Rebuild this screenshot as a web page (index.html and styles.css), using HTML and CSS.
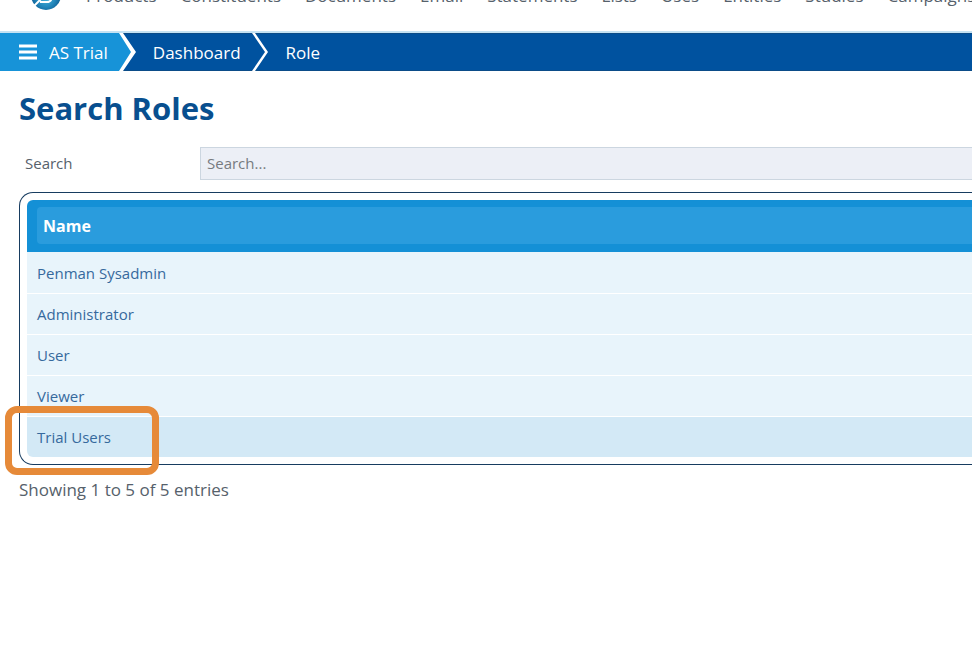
FILE: index.html
```html
<!DOCTYPE html>
<html lang="en">
<head>
    <meta charset="UTF-8">
    <meta name="viewport" content="width=device-width, initial-scale=1.0">
    <title>Search Roles</title>
    <link rel="stylesheet" href="styles.css">
</head>
<body>
    <header class="top-bar">
        <a class="logo" href="#" aria-label="Home">
            <svg width="30" height="30" viewBox="0 0 30 30">
                <defs>
                    <radialGradient id="ball" cx="50%" cy="60%" r="50%">
                        <stop offset="0" stop-color="#49b4dc"/>
                        <stop offset="0.6" stop-color="#2387bb"/>
                        <stop offset="1" stop-color="#0f5f95"/>
                    </radialGradient>
                </defs>
                <circle cx="15" cy="15" r="15" fill="url(#ball)"/>
                <path d="M3 26 L10 19" fill="none" stroke="#fff" stroke-width="2"/>
                <path d="M9 22H16C20 22 22 18 19 16" fill="none" stroke="#fff" stroke-width="2"/>
            </svg>
        </a>
        <nav class="main-nav">
            <a href="#">Products</a>
            <a href="#">Constituents</a>
            <a href="#">Documents</a>
            <a href="#">Email</a>
            <a href="#">Statements</a>
            <a href="#">Lists</a>
            <a href="#">Uses</a>
            <a href="#">Entities</a>
            <a href="#">Studies</a>
            <a href="#">Campaigns</a>
        </nav>
    </header>

    <nav class="breadcrumb">
        <a class="crumb crumb-first" href="#">
            <svg width="18" height="16" viewBox="0 0 18 16">
                <path d="M0 2H18M0 8H18M0 14H18" stroke="#fff" stroke-width="3"/>
            </svg>
            AS Trial
        </a>
        <svg class="arrow" width="18" height="38" viewBox="0 0 18 38">
            <path d="M0 0H2L15 19L2 38H0Z" fill="#1793d8"/>
            <path d="M0 0H4L17 19L4 38H0L12 19Z" fill="#fff"/>
        </svg>
        <a class="crumb" href="#">Dashboard</a>
        <svg class="arrow" width="18" height="38" viewBox="0 0 18 38">
            <path d="M0 0H3L16 19L3 38H0L13 19Z" fill="#fff"/>
        </svg>
        <a class="crumb" href="#">Role</a>
    </nav>

    <main class="content">
        <h1>Search Roles</h1>
        <div class="search-row">
            <label for="search">Search</label>
            <input type="text" id="search" placeholder="Search...">
        </div>
        <div class="table-panel">
            <table>
                <thead>
                    <tr><th scope="col"><div class="heading">Name</div></th></tr>
                </thead>
                <tbody>
                    <tr><td><a href="#">Penman Sysadmin</a></td></tr>
                    <tr><td><a href="#">Administrator</a></td></tr>
                    <tr><td><a href="#">User</a></td></tr>
                    <tr><td><a href="#">Viewer</a></td></tr>
                    <tr class="selected"><td><a href="#">Trial Users</a></td></tr>
                </tbody>
            </table>
            <div class="marker"></div>
        </div>
        <p class="summary">Showing 1 to 5 of 5 entries</p>
    </main>
</body>
</html>
```

FILE: styles.css
```css
* {
    box-sizing: border-box;
}
body {
    margin: 0;
    font-family: "Open Sans", "Noto Sans", sans-serif;
    font-size: 15px;
    color: #56616b;
    background: #fff;
    overflow-x: hidden;
}
a {
    color: inherit;
    text-decoration: none;
}
.top-bar {
    display: flex;
    align-items: flex-end;
    height: 33px;
    padding: 0 0 21px 31px;
    border-bottom: 2px solid #c5e2f3;
}
.logo {
    display: flex;
    flex-shrink: 0;
    margin-right: 25px;
}
.main-nav {
    display: flex;
    gap: 24px;
    font-size: 17px;
    line-height: 24px;
    margin-bottom: 2px;
    white-space: nowrap;
}
.breadcrumb {
    display: flex;
    height: 38px;
    background: #00529f;
    border-top: 1px solid #0b4c88;
    border-bottom: 1px solid #0b4c88;
    color: #fff;
    font-size: 17px;
}
.crumb {
    display: flex;
    align-items: center;
    padding: 0 11px 0 16px;
}
.crumb-first {
    gap: 12px;
    padding-left: 19px;
    background: #1793d8;
    margin: -1px 0;
}
.arrow {
    flex-shrink: 0;
    margin: -1px 0;
}
.content {
    padding: 16px 0 0 19px;
}
h1 {
    margin: 0;
    font-size: 31px;
    line-height: 42px;
    font-weight: 700;
    color: #084f8f;
}
.search-row {
    display: flex;
    align-items: center;
    margin: 18px 0 12px;
    padding-left: 6px;
}
.search-row label {
    width: 175px;
    padding-bottom: 2px;
}
.search-row input {
    flex: 1;
    height: 33px;
    padding: 0 6px 2px;
    border: 1px solid #ccd6e0;
    border-right: none;
    background: #eceff6;
    font: inherit;
    color: #56616b;
}
.search-row input::placeholder {
    color: #777b80;
}
.table-panel {
    position: relative;
    padding: 7px 0 7px 7px;
    border: 1px solid #173c60;
    border-right: none;
    border-radius: 14px 0 0 14px;
}
table {
    width: 100%;
    border-collapse: separate;
    border-spacing: 0;
}
th {
    padding: 7px 0 8px 10px;
    background: #1490d6;
    border-radius: 6px 0 0 0;
    text-align: left;
}
.heading {
    padding: 1px 6px 0;
    line-height: 36px;
    font-size: 16px;
    font-weight: 700;
    color: #fff;
    background: #2a9cdd;
    border-radius: 4px 0 0 4px;
}
td {
    height: 41px;
    padding: 0 10px 1px;
    background: #e8f4fb;
    border-top: 1px solid #fff;
    color: #36699d;
}
tr:first-child td {
    border-top-color: #e8f4fb;
}
.selected td {
    background: #d3e9f6;
    border-radius: 0 0 0 6px;
}
/* ring around the selected role */
.marker {
    position: absolute;
    left: -15px;
    bottom: -11px;
    width: 154px;
    height: 69px;
    border: 7px solid #e68a39;
    border-radius: 12px;
    pointer-events: none;
}
.summary {
    margin: 13px 0 0;
    font-size: 17px;
    line-height: 24px;
}
```
